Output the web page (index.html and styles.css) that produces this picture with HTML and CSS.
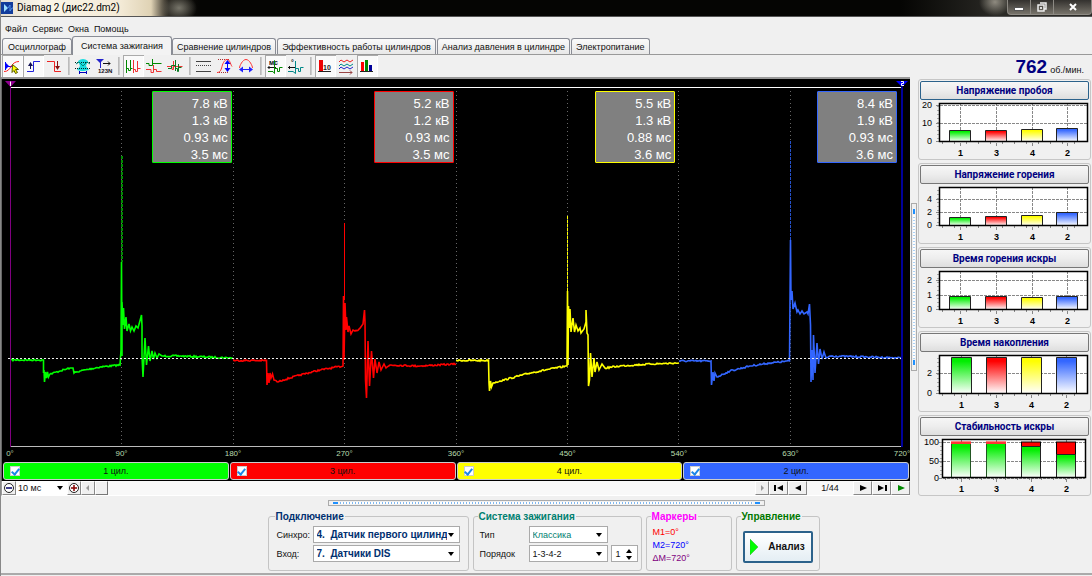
FILE: index.html
```html
<!DOCTYPE html>
<html lang="ru">
<head>
<meta charset="utf-8">
<title>Diamag 2 (дис22.dm2)</title>
<link rel="stylesheet" href="styles.css">
</head>
<body>
<header class="titlebar">
  <svg class="app-icon" width="12" height="12" viewBox="0 0 12 12"><rect width="12" height="12" fill="#123c9c"/><path d="M0 6h3V2l4 4-4 4V6z" fill="#9fe0ff"/><path d="M7 6l2-3v6l2-3h1" fill="none" stroke="#4f8fe8"/></svg>
  <h1 class="title">Diamag 2 (дис22.dm2)</h1>
  <div class="window-buttons">
    <button class="wbtn" aria-label="Свернуть"><svg width="12" height="10" viewBox="0 0 12 10"><rect x="1.500" y="5.500" width="9" height="3" fill="#fff" stroke="#555"/></svg></button>
    <button class="wbtn" aria-label="Восстановить"><svg width="12" height="10" viewBox="0 0 12 10"><path d="M4 1h6v6h-2M2 3h6v6H2z" fill="none" stroke="#eee" stroke-width="1.500"/><rect x="4" y="5" width="2" height="2" fill="#ddd"/></svg></button>
    <button class="wbtn wbtn-close" aria-label="Закрыть"><svg width="12" height="10" viewBox="0 0 12 10"><path d="M3 2l6 6M9 2L3 8" stroke="#fff" stroke-width="2"/></svg></button>
  </div>
</header>

<nav class="menu">
  <button>Файл</button><button>Сервис</button><button>Окна</button><button>Помощь</button>
</nav>

<div class="tabs" role="tablist">
  <button class="tab" role="tab">Осциллограф</button>
  <button class="tab tab-active" role="tab" aria-selected="true">Система зажигания</button>
  <button class="tab" role="tab">Сравнение цилиндров</button>
  <button class="tab" role="tab">Эффективность работы цилиндров</button>
  <button class="tab" role="tab">Анализ давления в цилиндре</button>
  <button class="tab" role="tab">Электропитание</button>
</div>

<main class="workspace">
  <section class="scope-column">
    <div class="toolbar">
      <button class="tool pressed" aria-label="Маркеры"><svg viewBox="0 0 20 20"><path d="M3 6v8l4-4z" fill="#00f"/><path d="M3.500 6v8M3 10.500h9" stroke="#00f"/><path d="M2 15.500c4 0 5-2 7-5s4-5 8-5" fill="none" stroke="#f22"/><path d="M10.500 8.500l6 5h-3l2 3-2 1-1.500-3-2 2z" fill="#ff0" stroke="#550"/></svg></button>
      <button class="tool pressed" aria-label="Фронт"><svg viewBox="0 0 20 20"><path d="M4 15.500h6.500V5.500H17" fill="none" stroke="#22d"/><path d="M7.500 13V8" stroke="#115"/><path d="M5 10l2.500-4 2.500 4z" fill="#115"/></svg></button>
      <button class="tool" aria-label="Спад"><svg viewBox="0 0 20 20"><path d="M3 5.500h7.500v10H17" fill="none" stroke="#e22"/><path d="M13.500 5v6" stroke="#811"/><path d="M11 10l2.500 4 2.500-4z" fill="#811"/></svg></button>
      <i class="sep"></i>
      <button class="tool" aria-label="Диапазон"><svg viewBox="0 0 20 20"><path d="M5 5q5-4 10 0l-2 5 3 4-5 1H8l-4-1 3-4z" fill="#19dce0"/><path d="M2 6.500h15M2 12.500h15" stroke="#022" stroke-dasharray="1 1"/><path d="M3 8l3-2 4 4 4-4 3 2" fill="none" stroke="#087"/><path d="M6 16.500h8M6.500 15v3M13.500 15v3" stroke="#00b"/></svg></button>
      <button class="tool" aria-label="Счёт"><svg viewBox="0 0 20 20"><path d="M2 3h8L6 7z" fill="#22c"/><path d="M6.500 6v6" stroke="#22c"/><path d="M9 7.500h7M14 5.500l2 2-2 2" fill="none" stroke="#111"/><text x="4" y="17" font-size="6" font-weight="bold" fill="#112" font-family="Liberation Sans">123N</text></svg></button>
      <i class="sep"></i>
      <button class="tool pressed" aria-label="Парад"><svg viewBox="0 0 20 20"><path d="M3.500 17V4M3.500 12.500h2v2h2V4v8.500h2" fill="none" stroke="#080"/><path d="M10.500 17V4M10.500 13.500h2v2h2V5v7.500h3" fill="none" stroke="#e33"/></svg></button>
      <button class="tool" aria-label="Растр"><svg viewBox="0 0 20 20"><path d="M2 7.500h3v2h3.500V3v4.500h9" fill="none" stroke="#080"/><path d="M2 13.500h5v3h2.500V9v4.500h3v2h5" fill="none" stroke="#e33"/></svg></button>
      <button class="tool" aria-label="Наложение"><svg viewBox="0 0 20 20"><path d="M2 10.500h5v3h1.500V5v5.500h9" fill="none" stroke="#e33"/><path d="M3 12.500h3.500v-3h4V4v11M10.500 12.500h2v3h1V8v3.500h3" fill="none" stroke="#087a20"/></svg></button>
      <i class="sep"></i>
      <button class="tool" aria-label="Линии"><svg viewBox="0 0 20 20"><path d="M2 5.500h15M2 15.500h15" stroke="#444"/><path d="M2 9.500h15" stroke="#444" stroke-dasharray="1 1"/></svg></button>
      <button class="tool" aria-label="Высота"><svg viewBox="0 0 20 20"><path d="M3 3.500h12M2 16.500h12" stroke="#a33" stroke-dasharray="1 1"/><path d="M2 16.500c3 0 4-2 5-6s3-7 5-7c3 0 3 4 5 7" fill="none" stroke="#f33"/><path d="M12.500 6v8" stroke="#00f"/><path d="M9.500 8l3-4 3 4zM9.500 12l3 4 3-4z" fill="#00f"/></svg></button>
      <button class="tool" aria-label="Ширина"><svg viewBox="0 0 20 20"><path d="M3.500 12c0-2 3-8.500 6.500-8.500s6.500 6.500 6.500 8.500" fill="none" stroke="#f33"/><path d="M5 13.500h10" stroke="#22f"/><path d="M7 10.500l-4 3 4 3zM13 10.500l4 3-4 3z" fill="#22f"/></svg></button>
      <i class="sep"></i>
      <button class="tool pressed" aria-label="Метки мс"><svg viewBox="0 0 20 20"><text x="4" y="9" font-size="7" font-weight="bold" fill="#111" font-family="Liberation Sans">мс</text><path d="M3 11.500h8M4.500 10L3 11.500 4.500 13" fill="none" stroke="#111"/><path d="M3 15.500h5l1.500 2V4.500v8h3v3h2v-4h3" fill="none" stroke="#080"/></svg></button>
      <button class="tool" aria-label="Метки градусов"><svg viewBox="0 0 20 20"><text x="5" y="9" font-size="7" font-weight="bold" fill="#111" font-family="Liberation Sans">°</text><path d="M2 11.500h8M4 10l-1.500 1.500L4 13" fill="none" stroke="#111"/><path d="M2 15.500h5l2.500 2V5v7.500h3v3h2v-4h3" fill="none" stroke="#088"/></svg></button>
      <i class="sep"></i>
      <button class="tool pressed" aria-label="Значения"><svg viewBox="0 0 20 20"><path d="M4 4h4v11H4z" fill="#e00"/><path d="M3 15.500h13" stroke="#222"/><text x="8" y="14" font-size="7" font-weight="bold" fill="#222" font-family="Liberation Sans">10</text></svg></button>
      <button class="tool" aria-label="Волны"><svg viewBox="0 0 20 20"><path d="M3 6l2-2 3 2 3-2 3 2 3-2" fill="none" stroke="#e22"/><path d="M3 10l2-2 3 2 3-2 3 2 3-2" fill="none" stroke="#088"/><path d="M3 13l2-2 3 2 3-2 3 2 3-2" fill="none" stroke="#22c"/><path d="M3 16.500h13M14 14.500l2 2-2 2" fill="none" stroke="#944"/></svg></button>
      <button class="tool pressed" aria-label="Диаграммы"><svg viewBox="0 0 20 20"><path d="M4 6h3v9H4z" fill="#f00"/><path d="M8 4h3v11H8z" fill="#080"/><path d="M12 9h3v6h-3z" fill="#009"/><path d="M3 15.500h13" stroke="#222"/></svg></button>
    </div>

    <div class="scope">
      <div class="plot">
        <svg id="waves" class="waves" viewBox="2 79 908 368" preserveAspectRatio="none"></svg>
        <div class="readings">
          <output class="reading green">7.8 кВ<br>1.3 кВ<br>0.93 мс<br>3.5 мс</output>
          <output class="reading red">5.2 кВ<br>1.2 кВ<br>0.93 мс<br>3.5 мс</output>
          <output class="reading yellow">5.5 кВ<br>1.3 кВ<br>0.88 мс<br>3.6 мс</output>
          <output class="reading blue">8.4 кВ<br>1.9 кВ<br>0.93 мс<br>3.6 мс</output>
        </div>
      </div>
      <div class="axis"><span>0°</span><span>90°</span><span>180°</span><span>270°</span><span>360°</span><span>450°</span><span>540°</span><span>630°</span><span>720°</span></div>
      <div class="cylinders">
        <label class="cyl green"><input type="checkbox" checked><span>1 цил.</span></label>
        <label class="cyl red"><input type="checkbox" checked><span>3 цил.</span></label>
        <label class="cyl yellow"><input type="checkbox" checked><span>4 цил.</span></label>
        <label class="cyl blue"><input type="checkbox" checked><span>2 цил.</span></label>
      </div>
    </div>

    <div class="scrollrow">
      <button class="sbtn" aria-label="Уменьшить"><svg viewBox="0 0 12 12"><circle cx="6" cy="6" r="4.500" fill="#fff" stroke="#222"/><path d="M3 6h6" stroke="#006" stroke-width="1.500"/></svg></button>
      <div class="combo combo-flat"><select aria-label="Развёртка"><option>10 мс</option></select></div>
      <button class="sbtn" aria-label="Увеличить"><svg viewBox="0 0 12 12"><circle cx="6" cy="6" r="4.500" fill="#fff" stroke="#222"/><path d="M3 6h6M6 3v6" stroke="#800" stroke-width="1.500"/></svg></button>
      <button class="sbtn" aria-label="Влево"><svg viewBox="0 0 12 12"><path d="M7 3v6L4 6z" fill="#999"/></svg></button>
      <div class="track"><i class="thumb"></i></div>
      <button class="sbtn" aria-label="Вправо"><svg viewBox="0 0 12 12"><path d="M5 3v6l3-3z" fill="#999"/></svg></button>
      <button class="sbtn wide" aria-label="Первый кадр"><svg viewBox="0 0 12 12"><path d="M2 3v6" stroke="#000" stroke-width="2"/><path d="M10 3v6L4 6z"/></svg></button>
      <button class="sbtn wide" aria-label="Назад"><svg viewBox="0 0 12 12"><path d="M9 3v6L3 6z"/></svg></button>
      <span class="page">1/44</span>
      <button class="sbtn wide" aria-label="Вперёд"><svg viewBox="0 0 12 12"><path d="M3 3v6l7-3z"/></svg></button>
      <button class="sbtn wide" aria-label="Последний кадр"><svg viewBox="0 0 12 12"><path d="M10 3v6" stroke="#000" stroke-width="2"/><path d="M2 3v6l6-3z"/></svg></button>
      <button class="sbtn wide" aria-label="Пуск"><svg viewBox="0 0 12 12"><path d="M3 3v6l7-3z" fill="#080"/></svg></button>
    </div>
  </section>

  <div class="vsplit"><div class="vgrip"></div></div>

  <aside class="side">
    <p class="rpm"><b>762</b><span>об./мин.</span></p>
    <div id="panels" class="panels"></div>
  </aside>
</main>

<div class="hsplit"><div class="hgrip"></div></div>

<footer class="groups">
  <fieldset class="group group-link">
    <legend class="navy">Подключение</legend>
    <label for="sync">Синхро:</label>
    <div class="combo bold"><select id="sync"><option>4.&nbsp;&nbsp;Датчик первого цилинд</option></select></div>
    <label for="input">Вход:</label>
    <div class="combo bold"><select id="input"><option>7.&nbsp;&nbsp;Датчики DIS</option></select></div>
  </fieldset>
  <fieldset class="group group-ign">
    <legend class="teal">Система зажигания</legend>
    <label for="type">Тип</label>
    <div class="combo combo-teal"><select id="type"><option>Классика</option></select></div>
    <i></i>
    <label for="order">Порядок</label>
    <div class="combo"><select id="order"><option>1-3-4-2</option></select></div>
    <div class="spin"><input type="text" value="1" aria-label="Первый цилиндр"><svg width="8" height="12" viewBox="0 0 8 12"><path d="M4 1l3 4H1zM1 8h6l-3 4z"/></svg></div>
  </fieldset>
  <fieldset class="group group-mark">
    <legend class="magenta">Маркеры</legend>
    <p class="m1">M1=0°</p>
    <p class="m2">M2=720°</p>
    <p class="dm">ΔM=720°</p>
  </fieldset>
  <fieldset class="group group-ctl">
    <legend class="dgreen">Управление</legend>
    <button class="analyze"><svg width="8" height="16" viewBox="0 0 8 16"><path d="M0 0v16l8-8z" fill="#0f0" stroke="#3a3" stroke-width=".5"/></svg><span>Анализ</span></button>
  </fieldset>
</footer>
<script src="app.js"></script>
</body>
</html>
```

FILE: styles.css
```css
* { box-sizing: border-box; }
body {
  margin: 0;
  min-height: 100vh;
  display: flex;
  flex-direction: column;
  background: #f0f0f0;
  border-left: 1px solid #888;
  color: #111;
  font: 9px/12px "Liberation Sans", Arial, sans-serif;
}
button, select, input { font: inherit; color: inherit; margin: 0; }
p, h1 { margin: 0; }

.titlebar {
  height: 17px;
  display: flex;
  align-items: center;
  background:
    radial-gradient(ellipse 18px 14px at 178px 8px, #77756a, transparent),
    radial-gradient(ellipse 16px 14px at 994px 2px, #8f8b80, transparent),
    linear-gradient(90deg, #e4ddcf 0, #fbf6ea 40px, #f3ead6 120px, #dfd2b4 150px, #1a1712 168px, #050503 200px, #050503 900px, #2b2a26 1000px);
  border-bottom: 1px solid #555;
}
.app-icon { flex: none; }
.title { flex: 1; padding-left: 4px; font: 10px/16px Roboto, "Noto Sans", sans-serif; color: #000; }
.window-buttons { display: flex; align-self: flex-start; border: 1px solid #8d8a84; border-top: 0; border-radius: 0 0 4px 4px; background: linear-gradient(#33312e, #77736a); }
.wbtn { width: 23px; height: 14px; padding: 0; border: 0; border-right: 1px solid #8d8a84; background: none; display: grid; place-items: center; }
.wbtn-close { width: 37px; border-right: 0; }

.menu { display: flex; gap: 5px; height: 20px; padding: 4px 4px 0; }
.menu button { padding: 0; border: 0; background: none; font: 9px/14px "Liberation Sans", Arial, sans-serif; }

.tabs { display: flex; align-items: flex-end; gap: 1px; height: 18px; padding-left: 1px; border-bottom: 1px solid #999; }
.tab { height: 16px; padding: 0 4px; border: 1px solid #898c95; border-bottom: 0; border-radius: 3px 3px 0 0; background: linear-gradient(#fafafa, #e8e8e8); white-space: nowrap; line-height: 14px; }
.tab:first-child { padding: 0 5px; }
.tab-active { height: 19px; padding: 0 8px; margin: 0 -1px; margin-bottom: -1px; background: #f3f3f3; line-height: 16px; }

.workspace { display: grid; grid-template-columns: minmax(0, 1fr) 8px 174px; }
.scope-column { display: flex; flex-direction: column; min-width: 0; }
.toolbar { display: flex; height: 24px; padding-left: 1px; border-bottom: 2px solid #999; }
.tool { width: 21px; height: 22px; padding: 0; border: 0; background: none; display: grid; place-items: center start; }
.tool svg { width: 20px; height: 20px; fill: #000; }
.pressed { background: #fafafa; box-shadow: inset 1px 1px #aaa, inset -1px -1px #fff; }
.sep { width: 2px; height: 18px; margin: 2px 3px; border-left: 1px solid #bbb; border-right: 1px solid #ccc; }

.scope { background: #000; border-left: 1px solid #666; overflow: hidden; }
.plot { position: relative; height: 368px; }
.waves { display: block; width: 100%; height: 100%; }
.readings { position: absolute; top: 12px; left: 0; right: 0; display: grid; grid-template-columns: repeat(4, 1fr); padding: 0 11px 0 10px; justify-items: end; }
.reading { width: 80px; height: 72px; margin-right: 2px; padding: 3px 3px 0 0; border: 1px solid; border-radius: 1px; background: #808080; color: #fff; font-size: 13px; line-height: 17px; text-align: right; }
.reading.green { border-color: #0f0; }
.reading.red { border-color: #f00; }
.reading.yellow { border-color: #ff0; }
.reading.blue { border-color: #36f; }
.axis { display: flex; justify-content: space-between; height: 15px; margin: 0 -2px; color: #b9dcae; font-size: 8px; line-height: 14px; }
.axis span { width: 20px; text-align: center; }
.cylinders { display: grid; grid-template-columns: repeat(4, 1fr); gap: 1px; padding: 0 1px 1px; }
.cyl { display: flex; align-items: center; height: 18px; padding: 0 6px; border: 1px solid #ccc; border-radius: 3px; color: #111; }
.cyl span { flex: 1; text-align: center; padding-right: 10px; }
.cyl.green { background: #0f0; }
.cyl.red { background: #f00; }
.cyl.yellow { background: #ff0; }
.cyl.blue { background: #36f; }
.cyl input { appearance: none; width: 10px; height: 10px; border: 1px solid #ccc; background: #fff; display: grid; place-items: center; }
.cyl input:checked::before { content: ""; width: 3px; height: 6px; border: solid #1b86e8; border-width: 0 2px 2px 0; transform: rotate(40deg); }

.scrollrow { display: flex; height: 15px; background: #f8f8f8; border-left: 1px solid #999; border-bottom: 1px solid #fff; }
.sbtn { width: 14px; height: 14px; padding: 0; border: 1px solid #fff; border-right-color: #888; border-bottom-color: #888; background: #f0f0f0; display: grid; place-items: center; }
.sbtn svg { width: 12px; height: 12px; }
.wide { width: 19px; }
.track { flex: 1; display: flex; }
.thumb { width: 13px; border: 1px solid #fff; border-right-color: #777; border-bottom-color: #777; background: #f0f0f0; }
.page { width: 46px; text-align: center; line-height: 14px; }

.combo { position: relative; min-width: 0; height: 17px; background: #fff; border: 1px solid #aaa; }
.combo::after { content: ""; position: absolute; right: 5px; top: 6px; border: 3px solid transparent; border-top: 4px solid #000; border-bottom: 0; pointer-events: none; }
.combo select { appearance: none; width: 100%; height: 100%; padding: 0 12px 0 3px; border: 0; background: none; display: block; }
.combo-flat { width: 51px; height: 14px; border: 0; }
.combo-flat select { padding-left: 2px; }
.combo-flat::after { top: 5px; right: 4px; }
.bold { font-size: 10px; font-weight: bold; color: #003070; }
.combo-teal { color: #008070; }

.vsplit { display: flex; align-items: center; justify-content: center; }
.vgrip { display: flex; flex-direction: column; justify-content: space-between; width: 6px; height: 168px; margin-top: 22px; padding: 4px 1px; border: 1px solid #aaa; background: repeating-linear-gradient(#acd2f5 0 1px, #fff 1px 3px) content-box; }
.vgrip::before, .vgrip::after { content: ""; height: 7px; background: linear-gradient(#1e90ff, #1e90ff) left center / 2px 5px no-repeat #f4f4f4; }

.rpm { display: flex; justify-content: flex-end; align-items: baseline; gap: 3px; height: 24px; padding-right: 8px; line-height: 24px; }
.rpm b { font-size: 19px; color: #000080; }
.panels { display: flex; flex-direction: column; gap: 3px; padding-right: 1px; }
.panel { height: 81px; padding: 1px; border: 1px solid #c6c6c6; border-radius: 3px; }
.panel button { display: block; width: 100%; height: 19px; padding: 0; border: 1px solid #777; border-radius: 2px; background: linear-gradient(#f6f6f6, #ededed 50%, #dedede); color: #000080; font: bold 10px/16px Roboto, sans-serif; }
.panel:first-child button { border-color: #2c628b; }
.bars { display: block; width: 100%; height: auto; font-size: 9px; }
.bars .cat { font-weight: bold; text-anchor: middle; }
.bars .tick { text-anchor: end; }

.hsplit { display: flex; justify-content: center; height: 15px; padding-top: 4px; }
.hgrip { display: flex; justify-content: space-between; width: 40%; height: 6px; padding: 1px 2px; border: 1px solid #aaa; background: repeating-linear-gradient(90deg, #7fb8f0 0 1px, #fff 1px 3px) content-box; }
.hgrip::before, .hgrip::after { content: ""; width: 9px; background: linear-gradient(#1e90ff, #1e90ff) center top / 5px 2px no-repeat #f4f4f4; }

.groups { display: flex; justify-content: center; gap: 4px; padding: 0 6px 2px 0; border-bottom: 2px solid #aaa; }
.group { height: 60px; min-width: 0; margin: 0; padding: 4px 6px 0; border: 1px solid #c4c4c4; border-radius: 3px; display: grid; align-content: start; align-items: center; gap: 2px 3px; }
.group legend { height: 11px; padding: 0 1px; margin-left: -2px; font-size: 10px; font-weight: bold; line-height: 11px; }
.group-link { width: 201px; padding-right: 8px; padding-left: 8px; grid-template-columns: 33px 1fr; }
.group-ign { width: 169px; grid-template-columns: 46px 79px 27px; }
.group-mark { width: 86px; gap: 1px; }
.group-ctl { width: 84px; padding-top: 9px; }
.spin { display: flex; align-items: center; height: 17px; padding-right: 4px; border: 1px solid #aaa; background: #fff; }
.spin input { width: 100%; min-width: 0; padding: 0; border: 0; background: none; text-align: center; }
.spin svg { flex: none; }
.analyze { display: flex; align-items: center; justify-content: center; gap: 10px; height: 32px; padding: 0; border: 2px solid #2c628b; border-radius: 2px; background: linear-gradient(#fff, #e4eef4); font-size: 10px; font-weight: bold; }
.navy { color: #003070; }
.teal { color: #008070; }
.magenta { color: #f0f; }
.dgreen { color: #007800; }
.m1 { color: #f00; }
.m2 { color: #00f; }
.dm { color: #800080; }
```

FILE: app.js
```js
const NS = "http://www.w3.org/2000/svg";
function add(parent, tag, attrs, text) {
  const el = document.createElementNS(NS, tag);
  for (const k in attrs) el.setAttribute(k, attrs[k]);
  if (text !== undefined) el.textContent = text;
  parent.appendChild(el);
  return el;
}

let seed = 7;
function noise() {
  seed = (seed * 16807) % 2147483647;
  return seed / 2147483647 - 0.5;
}

// Adds fine signal noise between distant samples.
function trace(points) {
  const out = [];
  points.forEach((p, i) => {
    out.push(p);
    const n = points[i + 1];
    if (!n || n[0] - p[0] < 4) return;
    for (let x = p[0] + 1; x < n[0]; x++) {
      const y = p[1] + (n[1] - p[1]) * (x - p[0]) / (n[0] - p[0]);
      out.push([x, y + noise() * 1.6]);
    }
  });
  return out.map(p => p.join(",")).join(" ");
}

const traces = [
  { color: "#0f0", peak: [122, 156, 262], dim: "#008a00", dash: "3 1", width: 2, points: [
    [11,360],[43,360],[43.5,360],[43.5,373],[44,370],[44.5,382],[45.5,372],[46.5,378],[47.5,372],[48.5,377],[50,374],[60,371],[70,368],[73,368],[74,373],[80,371],[100,367],[120,365],[121,350],[121.5,262],[122,356],[122,302],[123,325],[123.5,308],[124.5,329],[126,317],[127,331],[129,324],[130.5,331],[132,327],[134,331],[136,326],[138,328],[141,317],[141.5,315],[142,326],[142,356],[143,377],[144,357],[145,338],[146.5,365],[148.5,346],[150,361],[152,351],[153.5,359],[155,353],[157,358],[159,354],[162,356],[180,356],[233,358]] },
  { color: "#f00", peak: [344.5, 223, 300], dim: "#f00", dash: "", width: 1, points: [
    [233,360.5],[266.5,360.5],[267,385],[268,373],[269,383],[270,373],[271,378],[272.5,374],[274,380],[278,382],[283,380],[300,375],[320,370],[343,366],[343.5,296],[344,360],[345,303],[346,330],[346.5,317],[348,332],[349,326],[351,334],[353,330],[355,331],[359,329],[363,324],[364.5,310],[365,322],[365.5,380],[366.5,398],[368,341],[369.5,386],[371.5,351],[373.5,378],[375,359],[377,373],[379,362],[381,370],[384,364],[386,368],[390,365],[420,366],[456,364]] },
  { color: "#ff0", peak: [567.5, 216, 292], dim: "#ff0", dash: "3 1", width: 1, points: [
    [456,360.5],[488.5,360.5],[489,383],[489.5,391],[490.5,381],[491.5,387],[493,383],[500,381],[530,373],[550,369],[567,366],[567.5,291],[568,365],[568.5,306],[569.5,328],[570,309],[571,332],[573,318],[574.5,332],[576,325],[578,331],[580,328],[581,333],[584,329],[586,322],[586,310],[587,333],[588,335],[588.5,386],[589.5,380],[590.5,353],[592,377],[594,358],[595,372],[597,362],[599,370],[602,364],[605,368],[620,366],[650,364],[679,363]] },
  { color: "#36f", peak: [790.5, 141, 240], dim: "#2450c8", dash: "3 1", width: 1, points: [
    [679,361],[711,361],[711.5,385],[713,372],[714,381],[715,373],[717,377],[730,371],[750,366],[770,363],[789.5,361],[790,302],[790.5,240],[791,300],[792,291],[793,309],[795,303],[797,312],[798,310],[800,314],[802,311],[804,314],[807,312],[808,314],[809.5,304],[810.5,325],[811,382],[812,350],[813,380],[813.5,335],[815,373],[817,343],[818.5,364],[820,349],[822,359],[824,352],[826,358],[830,356],[870,357],[902,358]] }
];

const waves = document.getElementById("waves");
for (let i = 1; i < 8; i++) {
  const x = Math.round(11 + i * 111.4) - 0.5;
  add(waves, "path", { d: `M${x} 91V447`, stroke: "#666", "stroke-dasharray": "1 3" });
}
add(waves, "path", { d: "M11 87.5H902", stroke: "#fff" });
add(waves, "path", { d: "M11 446.5H902", stroke: "#bbb" });
traces.forEach(t => {
  add(waves, "path", { d: `M${t.peak[0]} ${t.peak[1]}V${t.peak[2]}`, stroke: t.dim, "stroke-width": t.width, "stroke-dasharray": t.dash });
  add(waves, "polyline", { points: trace(t.points), fill: "none", stroke: t.color, "stroke-width": 1.6 });
});
add(waves, "path", { d: "M8 358.5H902", stroke: "#eee", "stroke-dasharray": "2 2" });
add(waves, "path", { d: "M10.5 87V447", stroke: "#800080" });
add(waves, "path", { d: "M902 87V447", stroke: "#00009a", "stroke-width": 2 });
add(waves, "path", { d: "M5 81H16L10.5 87z", fill: "#900090" });
add(waves, "path", { d: "M896 81H908L902 87z", fill: "#00f" });
add(waves, "path", { d: "M10.5 81.5V86M901 81.5h2.5v2h-2v2h2.5", fill: "none", stroke: "#fff" });

// Positions are measured from the top of a panel.
const wide = [[949,22],[985,22],[1021,22],[1056,22]];
const narrow = [[951,20],[986,20],[1021,20],[1056,20]];
const panels = [
  { name: "Напряжение пробоя", ticks: [[20,26],[10,44],[0,62]], tops: [51,51,50,49], bars: wide },
  { name: "Напряжение горения", ticks: [[4,36],[2,49],[0,62]], tops: [54,53,52,49], bars: wide },
  { name: "Время горения искры", ticks: [[2,33],[1,48],[0,62]], tops: [49,49,50,49], bars: wide },
  { name: "Время накопления", ticks: [[2,42],[0,62]], tops: [26,26,26,26], bars: [[951,21],[986,21],[1021,21],[1056,21]] },
  { name: "Стабильность искры", ticks: [[100,27],[50,46],[0,63]], tops: [28,28,31,39], bars: narrow, stability: true }
];
const colors = { g: "#0e0", r: "#f00", y: "#ff0", b: "#36f" };
const host = document.getElementById("panels");
const defs = add(waves, "defs", {});
for (const k in colors) {
  const g = add(defs, "linearGradient", { id: "grad-" + k, x1: 0, y1: 0, x2: 0, y2: 1 });
  add(g, "stop", { offset: "0.1", "stop-color": colors[k] });
  add(g, "stop", { offset: "1", "stop-color": "#fff" });
}
panels.forEach(p => {
  const box = document.createElement("section");
  box.className = "panel";
  const btn = document.createElement("button");
  btn.textContent = p.name;
  box.appendChild(btn);
  host.appendChild(box);
  const s = add(box, "svg", { class: "bars", viewBox: "920 21 169 58" });
  const left = p.stability ? 942 : 939;
  const right = p.stability ? 1085 : 1087;
  add(s, "rect", { x: left, y: 24, width: right - left, height: 39, fill: "#fff" });
  p.ticks.forEach(([v, y]) => {
    add(s, "path", { d: `M${left - 3} ${y + 0.5}H${right}`, stroke: "#888", "stroke-dasharray": "3 1" });
    add(s, "text", { class: "tick", x: p.stability ? 939 : 932, y: y + 3 }, v);
  });
  for (let i = 0; i < 12; i++) {
    const x = left + 3.5 + i * 12;
    add(s, "path", { d: `M${x} 63v2`, stroke: "#888" });
  }
  for (let y = 27; y < 62; y += 4) add(s, "path", { d: `M${left - 2} ${y + 0.5}h2`, stroke: "#aaa" });
  ["1", "3", "4", "2"].forEach((c, i) => {
    const [x, w] = p.bars[i];
    const mid = x + Math.floor(w / 2) + 0.5;
    add(s, "path", { d: `M${mid} 24V67`, stroke: "#888", "stroke-dasharray": "3 1" });
    if (p.stability) add(s, "rect", { x: x + 0.5, y: 27, width: w - 1, height: 35, fill: "#f00", stroke: i < 2 ? "#f00" : "#000" });
    const fill = p.stability ? "g" : "gryb"[i];
    add(s, "rect", { x: x + 0.5, y: p.tops[i] + 0.5, width: w - 1, height: 62 - p.tops[i], fill: `url(#grad-${fill})` });
    add(s, "path", { d: `M${x + 0.5} 63V${p.tops[i] + 0.5}H${x + w - 0.5}V63`, fill: "none", stroke: p.stability && i < 2 ? "#252" : "#222", "stroke-width": 1 });
    if (p.stability && i < 2) add(s, "path", { d: `M${x} 28H${x + w}`, stroke: "#f33", "stroke-width": 2 });
    add(s, "text", { class: "cat", x: mid, y: 77 }, c);
  });
  add(s, "rect", { x: left + 0.5, y: 24.5, width: right - left, height: 38, fill: "none", stroke: "#000", "stroke-width": 1.5 });
});
```
